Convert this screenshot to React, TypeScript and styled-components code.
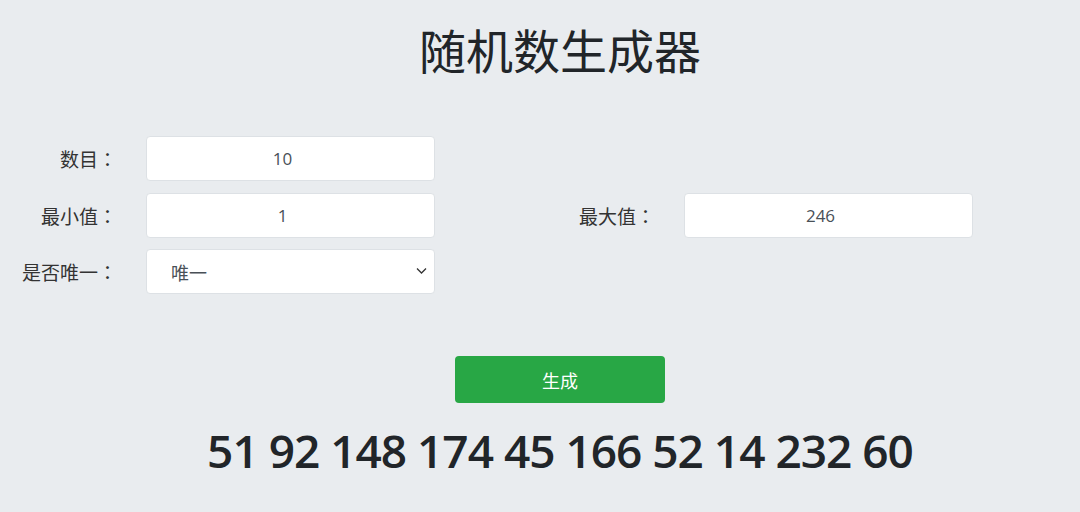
import React, { useState } from 'react';
import styled, { createGlobalStyle } from 'styled-components';

const GlobalStyle = createGlobalStyle`
  html, body {
    margin: 0;
    padding: 0;
    background-color: #e9ecef;
  }
  body {
    font-family: "Open Sans", "Noto Sans CJK SC", sans-serif;
    color: #212529;
  }
`;

const StyledPage = styled.div`
  width: 1080px;
  height: 512px;
  overflow: hidden;
`;

const StyledCentered = styled.div`
  padding-left: 40px;
  display: flex;
  justify-content: center;
`;

const StyledTitle = styled.h1`
  margin: 21px 0 0;
  font-family: "Noto Sans CJK SC", sans-serif;
  font-size: 47px;
  font-weight: 400;
  line-height: 1.2;
  color: #212529;
`;

const StyledForm = styled.div`
  margin-top: 59px;
  display: flex;
  flex-direction: column;
  gap: 11.5px;
`;

const StyledFormRow = styled.div`
  display: grid;
  grid-template-columns: 538px 538px;
`;

const StyledField = styled.label`
  display: grid;
  grid-template-columns: 117px 289px;
  column-gap: 29px;
  align-items: center;
`;

const StyledLabel = styled.span`
  text-align: right;
  font-family: "Noto Sans CJK SC", sans-serif;
  font-size: 19px;
  color: #333;
`;

const StyledColon = styled.span`
  font-family: "Noto Sans CJK TC", sans-serif;
`;

const StyledInput = styled.input`
  box-sizing: border-box;
  width: 100%;
  height: 45px;
  padding: 0 28px 0 12px;
  border: 1px solid #dde1e5;
  border-radius: 4px;
  background: #fff;
  font-family: "Open Sans", sans-serif;
  font-size: 17px;
  color: #495057;
  text-align: center;
  outline: none;
`;

const StyledSelectWrap = styled.div`
  position: relative;
  height: 45px;
`;

const StyledSelect = styled.select`
  box-sizing: border-box;
  width: 100%;
  height: 45px;
  padding: 0 30px 0 24px;
  border: 1px solid #dde1e5;
  border-radius: 4px;
  background: #fff;
  appearance: none;
  font-family: "Noto Sans CJK SC", sans-serif;
  font-size: 18px;
  color: #495057;
  outline: none;
`;

const StyledChevron = styled.svg`
  position: absolute;
  right: 8px;
  top: 18px;
  pointer-events: none;
`;

const StyledActions = styled(StyledCentered)`
  margin-top: 62px;
`;

const StyledButton = styled.button`
  width: 210px;
  height: 47px;
  border: none;
  border-radius: 4px;
  background-color: #28a745;
  color: #fff;
  font-family: "Noto Sans CJK SC", sans-serif;
  font-size: 18px;
  cursor: pointer;
`;

const StyledResult = styled.div`
  margin-top: 20px;
  font-family: "Open Sans", sans-serif;
  font-size: 46px;
  font-weight: 600;
  line-height: 1.2;
  letter-spacing: -1px;
  color: #212529;
`;

const Colon = () => <StyledColon>：</StyledColon>;

const App: React.FC = () => {
  const [count, setCount] = useState('10');
  const [min, setMin] = useState('1');
  const [max, setMax] = useState('246');
  const [unique, setUnique] = useState('unique');
  const [numbers] = useState([51, 92, 148, 174, 45, 166, 52, 14, 232, 60]);

  return (
    <StyledPage>
      <GlobalStyle />
      <StyledCentered>
        <StyledTitle>随机数生成器</StyledTitle>
      </StyledCentered>

      <StyledForm>
        <StyledFormRow>
          <StyledField>
            <StyledLabel>
              数目<Colon />
            </StyledLabel>
            <StyledInput value={count} onChange={(e) => setCount(e.target.value)} />
          </StyledField>
        </StyledFormRow>
        <StyledFormRow>
          <StyledField>
            <StyledLabel>
              最小值<Colon />
            </StyledLabel>
            <StyledInput value={min} onChange={(e) => setMin(e.target.value)} />
          </StyledField>
          <StyledField>
            <StyledLabel>
              最大值<Colon />
            </StyledLabel>
            <StyledInput value={max} onChange={(e) => setMax(e.target.value)} />
          </StyledField>
        </StyledFormRow>
        <StyledFormRow>
          <StyledField>
            <StyledLabel>
              是否唯一<Colon />
            </StyledLabel>
            <StyledSelectWrap>
              <StyledSelect value={unique} onChange={(e) => setUnique(e.target.value)}>
                <option value="unique">唯一</option>
                <option value="repeat">可重复</option>
              </StyledSelect>
              <StyledChevron width="11" height="8" viewBox="0 0 11 8">
                <path d="M1 1.5 L5.5 6 L10 1.5" fill="none" stroke="#333" strokeWidth="1.3" />
              </StyledChevron>
            </StyledSelectWrap>
          </StyledField>
        </StyledFormRow>
      </StyledForm>

      <StyledActions>
        <StyledButton>生成</StyledButton>
      </StyledActions>

      <StyledCentered>
        <StyledResult>{numbers.join(' ')}</StyledResult>
      </StyledCentered>
    </StyledPage>
  );
};

export default App;
